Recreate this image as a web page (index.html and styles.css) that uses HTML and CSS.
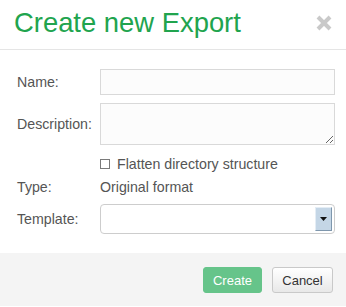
FILE: index.html
```html
<!DOCTYPE html>
<html lang="en">
<head>
  <meta charset="UTF-8">
  <title>Create new Export</title>
  <link rel="stylesheet" href="styles.css">
</head>
<body>

  <div class="dialog">
    <!-- Header -->
    <div class="dialog-header">
      <h1 class="dialog-title">Create new Export</h1>
      <span class="close-btn">
        <svg width="16" height="16" viewBox="0 0 16 16">
          <path d="M2 2 L14 14 M14 2 L2 14" stroke="#c9c9c9" stroke-width="4" fill="none"/>
        </svg>
      </span>
    </div>

    <!-- Form -->
    <div class="dialog-body">
      <div class="form-row row-name">
        <label class="form-label">Name:</label>
        <input class="text-input" type="text">
      </div>
      <div class="form-row row-desc">
        <label class="form-label">Description:</label>
        <textarea class="text-area"></textarea>
      </div>
      <div class="form-row row-check">
        <span></span>
        <label class="check-label"><span class="check-box"></span>Flatten directory structure</label>
      </div>
      <div class="form-row row-type">
        <span class="form-label">Type:</span>
        <span class="form-value">Original format</span>
      </div>
      <div class="form-row row-template">
        <label class="form-label">Template:</label>
        <div class="select-box">
          <span class="select-btn">
            <svg width="7" height="4" viewBox="0 0 7 4"><path d="M0 0 H7 L3.5 4 Z" fill="#111"/></svg>
          </span>
        </div>
      </div>
    </div>

    <!-- Footer -->
    <div class="dialog-footer">
      <button class="btn btn-create">Create</button>
      <button class="btn btn-cancel">Cancel</button>
    </div>
  </div>

</body>
</html>
```

FILE: styles.css
```css
body {
  margin: 0;
  padding: 0;
  font-family: "Liberation Sans", Arial, sans-serif;
  background: #fff;
  color: #555;
}

.dialog {
  width: 346px;
  background: #fff;
}

/* Header */
.dialog-header {
  display: flex;
  align-items: center;
  justify-content: space-between;
  padding: 7px 14px 10px 14px;
  border-bottom: 1px solid #e5e5e5;
}

.dialog-title {
  margin: 0;
  font-size: 27.4px;
  font-weight: normal;
  line-height: 32px;
  color: #21a44e;
}

.close-btn {
  display: flex;
  width: 16px;
  height: 16px;
}

/* Body */
.dialog-body {
  padding: 19px 11px 19px 17px;
}

.form-row {
  display: grid;
  grid-template-columns: 83px 235px;
  align-items: center;
  font-size: 14.2px;
  line-height: 20px;
}

.row-desc { margin-top: 8px; }
.row-check { margin-top: 9px; }
.row-type { margin-top: 3px; }
.row-template { margin-top: 7px; }

.text-input {
  box-sizing: border-box;
  height: 26px;
  margin: 0;
  border: 1px solid #d9d9d9;
  background: #fcfcfc;
  font: inherit;
}

.text-area {
  box-sizing: border-box;
  height: 42px;
  margin: 0;
  border: 1px solid #d9d9d9;
  background: #fcfcfc;
  font: inherit;
}

.check-label {
  display: flex;
  align-items: center;
  gap: 7px;
}

.check-box {
  box-sizing: border-box;
  width: 10px;
  height: 10px;
  border: 1px solid #7a7a7a;
  background: #fff;
}

.select-box {
  box-sizing: border-box;
  height: 30px;
  display: flex;
  align-items: center;
  justify-content: flex-end;
  padding-right: 2px;
  border: 1px solid #cdcdcd;
  border-radius: 4px;
  background: #fff;
}

.select-btn {
  box-sizing: border-box;
  width: 17px;
  height: 24px;
  display: flex;
  align-items: center;
  justify-content: center;
  background: #c4d6e6;
  border: 1px solid #e4edf5;
  border-right-color: #7f97ad;
  border-bottom-color: #7f97ad;
}

/* Footer */
.dialog-footer {
  display: flex;
  justify-content: flex-end;
  gap: 10px;
  padding: 14px 13px 14px 0;
  background: #f4f4f4;
  height: 53px;
  box-sizing: border-box;
}

.btn {
  height: 26px;
  padding: 0 6px;
  border-radius: 3px;
  font-family: "Liberation Sans", Arial, sans-serif;
  font-size: 13px;
}

.btn-create {
  width: 59px;
  border: 1px solid #66c48a;
  background: #66c48a;
  color: #fff;
}

.btn-cancel {
  width: 61px;
  border: 1px solid #c9c9c9;
  background: linear-gradient(#ffffff, #e8e8e8);
  color: #333;
}
```
